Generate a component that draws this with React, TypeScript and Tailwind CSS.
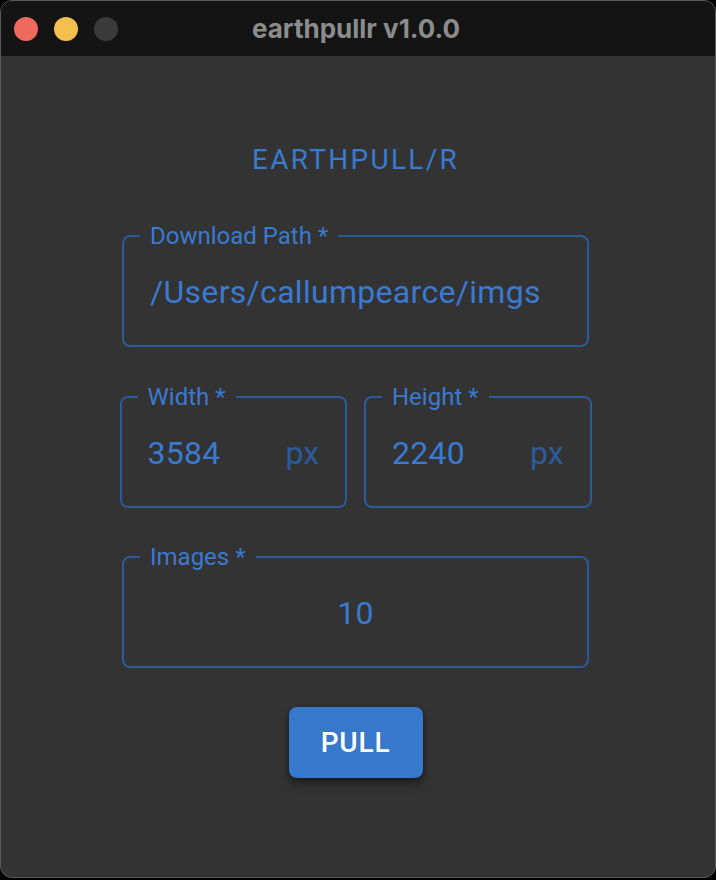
const blue = 'text-[#3a7ad0]';

function Field({
  label,
  value,
  unit,
  center,
  className = '',
}: {
  label: string;
  value: string;
  unit?: string;
  center?: boolean;
  className?: string;
}) {
  return (
    <fieldset className={`border-2 border-[#2b5a9a] rounded-[8px] px-[16px] m-0 min-w-0 ${className}`}>
      <legend className={`px-[10px] text-[24px] leading-[24px] ${blue}`}>
        {label} *
      </legend>
      <div className="flex items-center pt-[21px] pb-[30px] px-[10px] text-[32px] leading-[46px]">
        <span className={`flex-1 tracking-[0.3px] ${blue} ${center ? 'text-center' : ''}`}>{value}</span>
        {unit && <span className="text-[#2c5b9c] ml-[16px]">{unit}</span>}
      </div>
    </fieldset>
  );
}

export default function App() {
  return (
    <div className="w-[716px] h-[880px] bg-black" style={{ fontFamily: 'Roboto, "Noto Sans", sans-serif' }}>
      <div className="h-[878px] rounded-[12px] border border-[#5a5a5a] overflow-hidden bg-[#333333] flex flex-col">
        <div className="h-[55px] bg-[#141414] grid grid-cols-[1fr_auto_1fr] items-center">
          <div className="flex items-center gap-[16px] pl-[13px]">
            <span className="w-[24px] h-[24px] rounded-full bg-[#ee6a5f]" />
            <span className="w-[24px] h-[24px] rounded-full bg-[#f5bf4f]" />
            <span className="w-[24px] h-[24px] rounded-full bg-[#3a3a3a]" />
          </div>
          <div
            className="text-[26px] font-bold text-[#8c8c8c] pr-[4px]"
            style={{ fontFamily: 'Inter, "Noto Sans", sans-serif' }}
          >
            earthpullr v1.0.0
          </div>
          <div />
        </div>

        <div className="flex flex-col items-center pr-[5px]">
          <h1 className={`mt-[88px] text-[28px] leading-[32px] tracking-[2.3px] font-normal ${blue}`}>
            EARTHPULL/R
          </h1>

          <Field label="Download Path" value="/Users/callumpearce/imgs" className="w-[467px] mt-[48px]" />

          <div className="w-[472px] mt-[38px] grid grid-cols-2 gap-[17px]">
            <Field label="Width" value="3584" unit="px" />
            <Field label="Height" value="2240" unit="px" />
          </div>

          <Field label="Images" value="10" center className="w-[467px] mt-[37px]" />

          <button className="mt-[39px] w-[134px] h-[71px] rounded-[8px] bg-[#3678cc] text-white text-[28px] font-medium tracking-[0.8px] shadow-[0_6px_10px_rgba(0,0,0,0.35),0_2px_4px_rgba(0,0,0,0.3)]">
            PULL
          </button>
        </div>
      </div>
    </div>
  );
}
